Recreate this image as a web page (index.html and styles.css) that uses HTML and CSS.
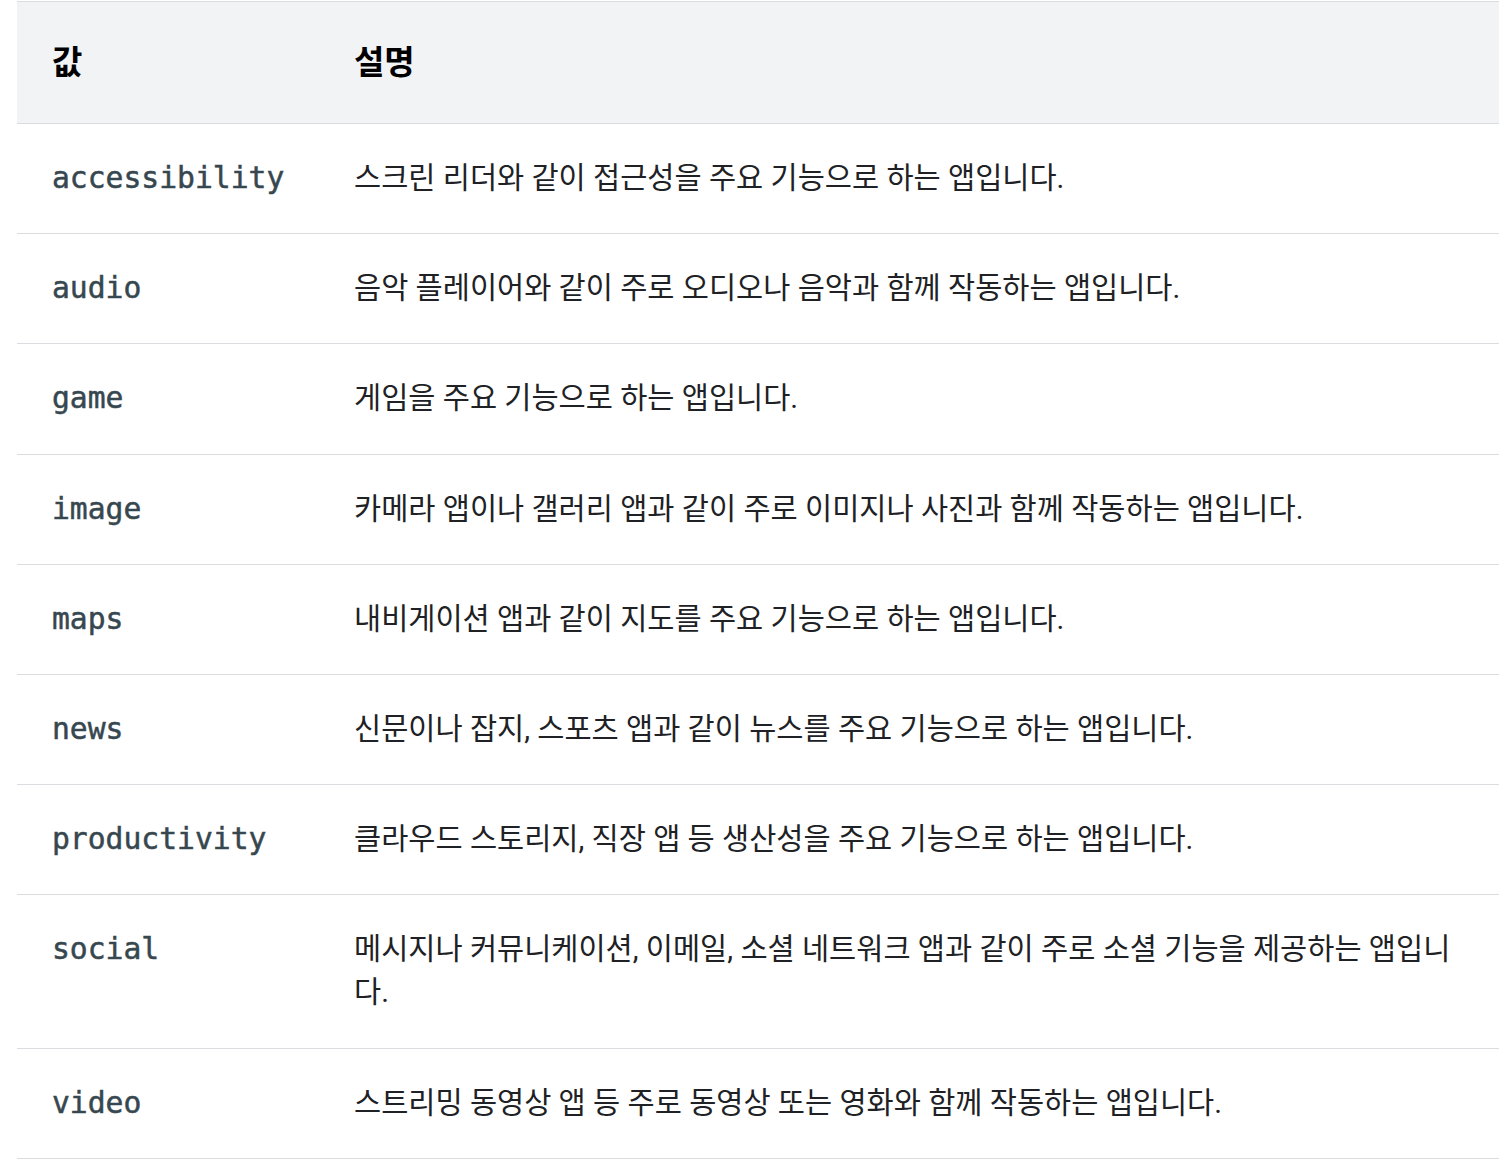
FILE: index.html
```html
<!DOCTYPE html>
<html lang="ko">
<head>
<meta charset="utf-8">
<link rel="stylesheet" href="styles.css">
</head>
<body>
<table class="tbl">
  <thead>
    <tr><th class="c1">값</th><th class="c2">설명</th></tr>
  </thead>
  <tbody>
    <tr><td class="c1"><code>accessibility</code></td><td class="c2">스크린 리더와 같이 접근성을 주요 기능으로 하는 앱입니다.</td></tr>
    <tr><td class="c1"><code>audio</code></td><td class="c2">음악 플레이어와 같이 주로 오디오나 음악과 함께 작동하는 앱입니다.</td></tr>
    <tr><td class="c1"><code>game</code></td><td class="c2">게임을 주요 기능으로 하는 앱입니다.</td></tr>
    <tr><td class="c1"><code>image</code></td><td class="c2">카메라 앱이나 갤러리 앱과 같이 주로 이미지나 사진과 함께 작동하는 앱입니다.</td></tr>
    <tr><td class="c1"><code>maps</code></td><td class="c2">내비게이션 앱과 같이 지도를 주요 기능으로 하는 앱입니다.</td></tr>
    <tr><td class="c1"><code>news</code></td><td class="c2">신문이나 잡지, 스포츠 앱과 같이 뉴스를 주요 기능으로 하는 앱입니다.</td></tr>
    <tr><td class="c1"><code>productivity</code></td><td class="c2">클라우드 스토리지, 직장 앱 등 생산성을 주요 기능으로 하는 앱입니다.</td></tr>
    <tr><td class="c1"><code>social</code></td><td class="c2">메시지나 커뮤니케이션, 이메일, 소셜 네트워크 앱과 같이 주로 소셜 기능을 제공하는 앱입니다.</td></tr>
    <tr><td class="c1"><code>video</code></td><td class="c2">스트리밍 동영상 앱 등 주로 동영상 또는 영화와 함께 작동하는 앱입니다.</td></tr>
  </tbody>
</table>
</body>
</html>
```
FILE: styles.css
```css
html, body {
  margin: 0;
  padding: 0;
  background: #ffffff;
}
body {
  padding: 1px 8px 0 17px;
  font-family: Roboto, "Noto Sans CJK KR", sans-serif;
  color: #202124;
}
.tbl {
  width: 1482px;
  border-collapse: collapse;
  table-layout: fixed;
  font-size: 29.5px;
  line-height: 43px;
  border-top: 1px solid #dadce0;
}
.tbl th, .tbl td {
  text-align: left;
  vertical-align: top;
  border-bottom: 1px solid #dadce0;
}
.tbl th {
  background: #f1f3f4;
  font-weight: 700;
  font-size: 33px;
  color: #000000;
  padding: 39px 35px 39px 35px;
}
.tbl td {
  padding: 33.1px 35px 33.1px 35px;
}
.tbl .c1 {
  width: 232px;
}
.tbl code {
  font-family: "DejaVu Sans Mono", monospace;
  font-size: 29.7px;
  line-height: 1;
  font-weight: 400;
  color: #37474f;
  -webkit-text-stroke: 0.5px #37474f;
}
```
